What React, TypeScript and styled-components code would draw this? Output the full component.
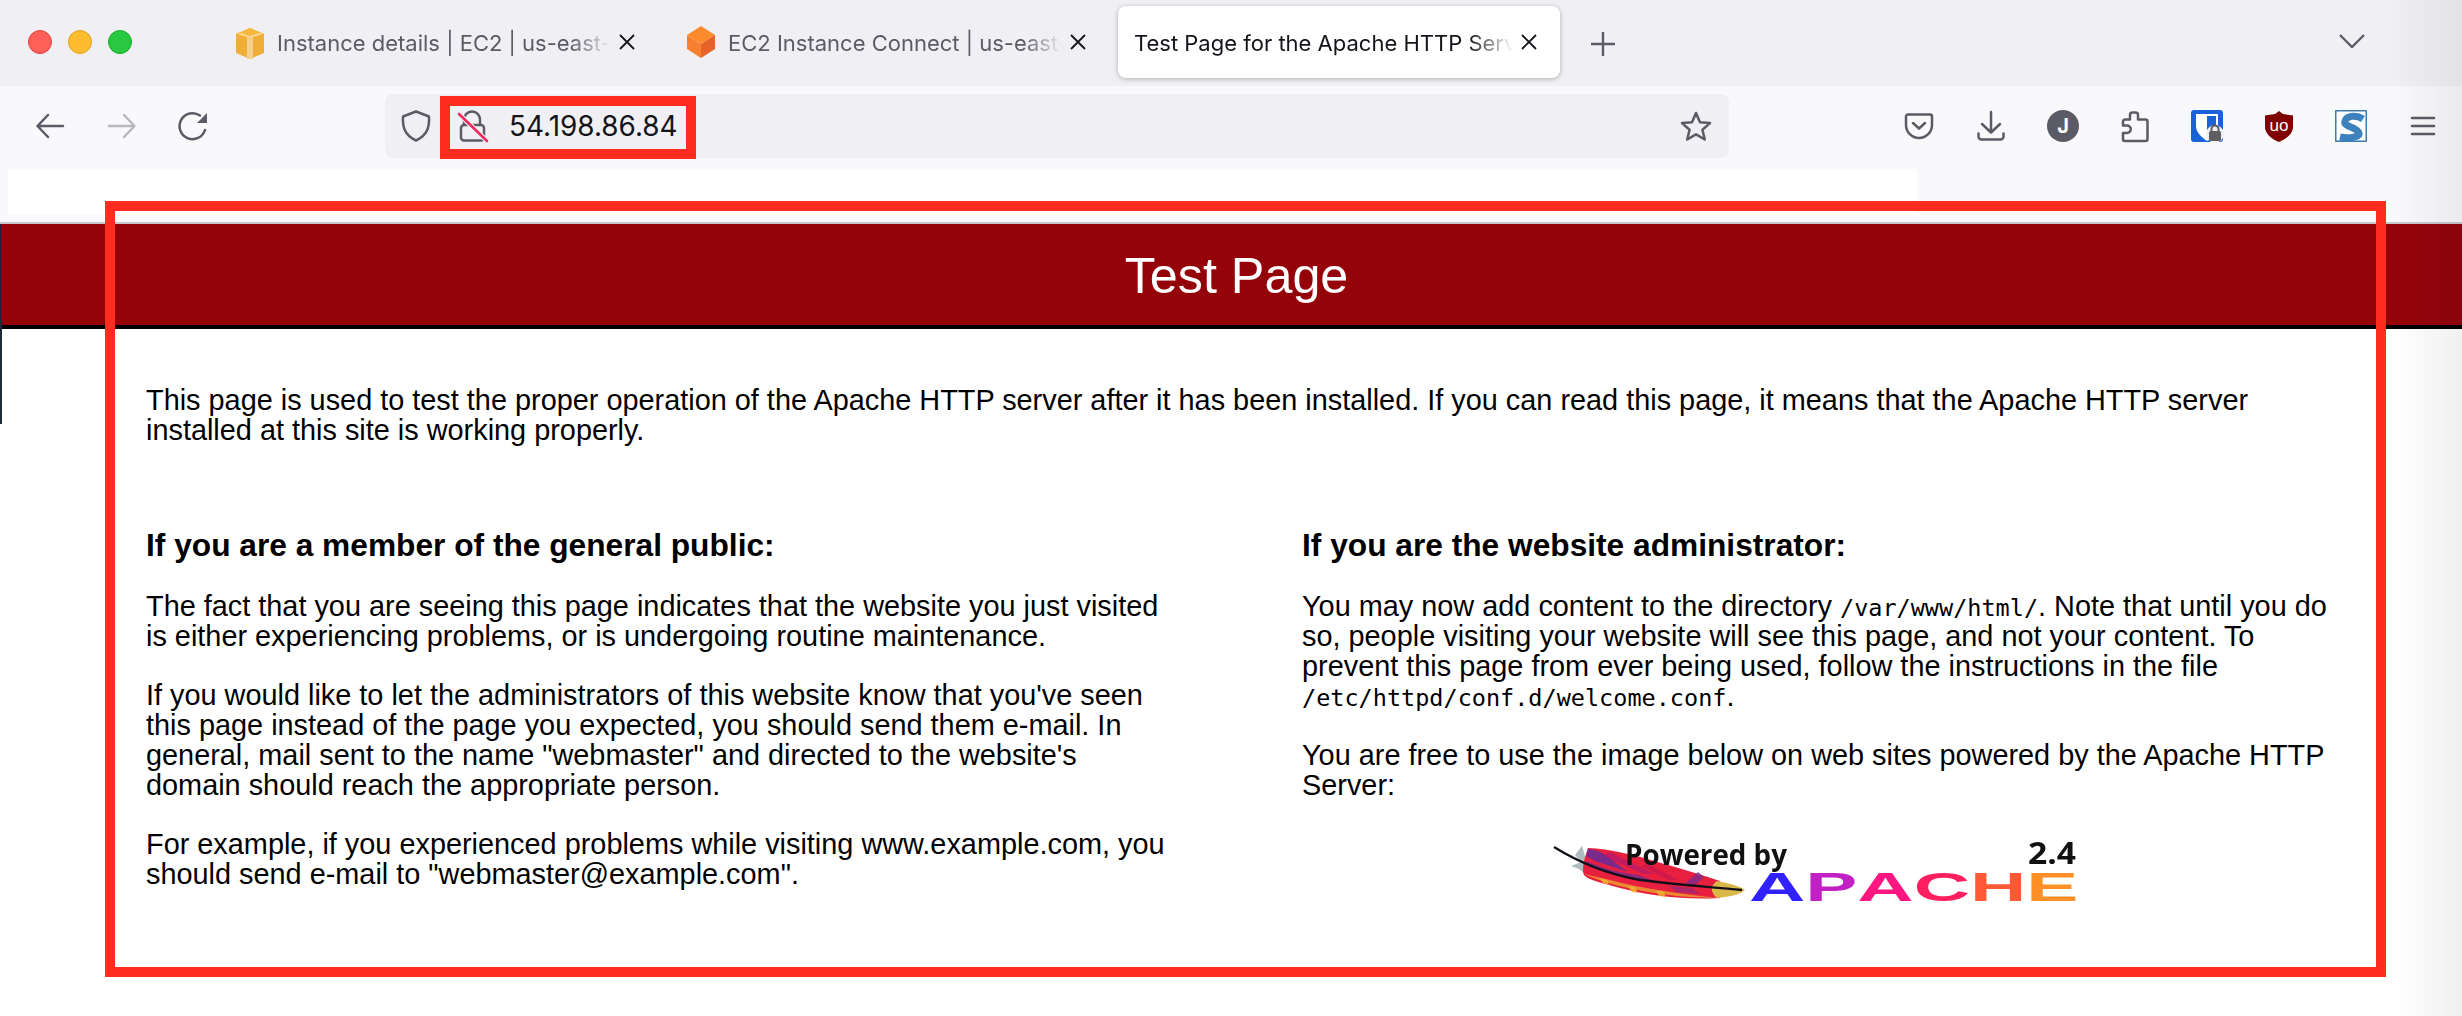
import { styled, createGlobalStyle } from 'styled-components';

const GlobalStyle = createGlobalStyle`
  html, body {
    margin: 0;
    padding: 0;
    background: #ffffff;
  }
  * {
    box-sizing: border-box;
  }
`;

const Screen = styled.div`
  position: relative;
  width: 2462px;
  height: 1016px;
  overflow: hidden;
  background: #ffffff;
  font-family: 'Liberation Sans', Arial, sans-serif;
`;

const TabBar = styled.div`
  display: flex;
  align-items: flex-start;
  height: 86px;
  background: #f0f0f4;
  font-family: Inter, 'Liberation Sans', sans-serif;
`;

const Lights = styled.div`
  display: flex;
  align-items: center;
  gap: 16px;
  width: 216px;
  height: 84px;
  padding-left: 28px;
`;

const Light = styled.span<{ $color: string; $edge: string }>`
  width: 24px;
  height: 24px;
  border-radius: 50%;
  background: ${(p) => p.$color};
  border: 1px solid ${(p) => p.$edge};
`;

const Tabs = styled.div`
  display: flex;
  gap: 9px;
  margin-top: 6px;
`;

const Tab = styled.div<{ $active?: boolean }>`
  display: flex;
  align-items: center;
  width: 442px;
  height: 72px;
  padding: 0 23px 0 ${(p) => (p.$active ? '16px' : '19px')};
  border-radius: 8px;
  background: ${(p) => (p.$active ? '#ffffff' : 'transparent')};
  box-shadow: ${(p) => (p.$active ? '0 1px 5px rgba(0, 0, 0, 0.28)' : 'none')};
`;

const Favicon = styled.svg`
  flex: none;
  width: 30px;
  height: 34px;
  margin-right: 12px;
`;

const TabTitle = styled.span<{ $active?: boolean }>`
  flex: 1;
  overflow: hidden;
  white-space: nowrap;
  padding-top: 2px;
  font-size: 22px;
  color: ${(p) => (p.$active ? '#15141a' : '#5b5b66')};
  mask-image: linear-gradient(to right, #000 88%, transparent 100%);
`;

const CloseIcon = styled.svg`
  flex: none;
  width: 16px;
  height: 16px;
  margin-left: 8px;
  stroke: #15141a;
  stroke-width: 1.8;
  fill: none;
`;

const NewTab = styled.svg`
  flex: none;
  width: 24px;
  height: 24px;
  margin: 32px 0 0 31px;
  stroke: #5b5b66;
  stroke-width: 2.4;
  fill: none;
`;

const TabListButton = styled.svg`
  flex: none;
  width: 26px;
  height: 14px;
  margin: 34px 97px 0 auto;
  stroke: #5b5b66;
  stroke-width: 2.4;
  fill: none;
`;

const Toolbar = styled.div`
  display: flex;
  align-items: flex-start;
  height: 83px;
  padding: 8px 3px 0 14px;
  background: #f9f9fb;
`;

const Slot = styled.div`
  display: flex;
  align-items: center;
  justify-content: center;
  width: 72px;
  height: 64px;
`;

const Glyph = styled.svg<{ $faded?: boolean }>`
  display: block;
  overflow: visible;
  fill: none;
  stroke: ${(p) => (p.$faded ? '#b8b8bd' : '#5b5b66')};
  stroke-width: 2.5;
  stroke-linecap: round;
  stroke-linejoin: round;
`;

const AddressBar = styled.div`
  display: flex;
  align-items: center;
  width: 1344px;
  height: 64px;
  margin-left: 155px;
  padding: 0 17px 0 16px;
  border-radius: 8px;
  background: #f0f0f4;
  font-family: Inter, 'Liberation Sans', sans-serif;
`;

const ShieldSlot = styled.div`
  flex: none;
  width: 57px;
`;

const LockSlot = styled.div`
  flex: none;
  width: 51px;
`;

const Url = styled.span`
  flex: 1;
  font-size: 27.9px;
  color: #15141a;
`;

const Actions = styled.div`
  display: flex;
  margin-left: auto;
`;

const ContentTop = styled.div`
  height: 55px;
  padding-left: 8px;
  background: #f9f9fb;
  border-bottom: 2px solid #c8c8cc;
`;

const BlankStrip = styled.div`
  width: 1909px;
  height: 46px;
  background: #ffffff;
`;

const Banner = styled.header`
  display: flex;
  align-items: center;
  justify-content: center;
  height: 105px;
  padding: 2px 0 0 11px;
  background: #95030a;
  border-bottom: 4px solid #000000;
`;

const Title = styled.h1`
  margin: 0;
  font-size: 50.3px;
  font-weight: 400;
  color: #ffffff;
`;

const Body = styled.main`
  padding: 56px 0 0 146px;
  font-size: 28.86px;
  line-height: 30px;
  color: #000000;
`;

const Intro = styled.p`
  width: 2180px;
  margin: 0 0 82px;
`;

const Columns = styled.div`
  display: grid;
  grid-template-columns: 1030px 1026px;
  column-gap: 126px;
`;

const Column = styled.section``;

const Heading = styled.h2`
  margin: 0 0 28px;
  font-size: 31.7px;
  line-height: 36px;
  font-weight: 700;
`;

const Para = styled.p`
  margin: 0 0 28.8px;
`;

const Code = styled.code`
  font-family: 'DejaVu Sans Mono', monospace;
  font-size: 23.5px;
  line-height: 1;
`;

const LogoRow = styled.div`
  display: flex;
  justify-content: center;
  padding-top: 5px;
`;

const Logo = styled.svg`
  display: block;
  width: 530px;
  height: 75px;
  filter: blur(0.6px);
`;

const Callout = styled.div<{ $left: number; $top: number; $width: number; $height: number }>`
  position: absolute;
  left: ${(p) => p.$left}px;
  top: ${(p) => p.$top}px;
  width: ${(p) => p.$width}px;
  height: ${(p) => p.$height}px;
  border: 10px solid #ff2d20;
  pointer-events: none;
`;

const DesktopEdge = styled.div`
  position: absolute;
  left: 0;
  top: 224px;
  width: 2px;
  height: 200px;
  background: #1d2a36;
`;

const SideShade = styled.div`
  position: absolute;
  right: 0;
  top: 0;
  bottom: 0;
  width: 70px;
  background: linear-gradient(to right, rgba(0, 0, 0, 0), rgba(0, 0, 0, 0.06));
  pointer-events: none;
`;

function Close() {
  return (
    <CloseIcon viewBox="0 0 16 16">
      <path d="M1 1l14 14M15 1L1 15" />
    </CloseIcon>
  );
}

function AwsCube() {
  return (
    <Favicon viewBox="0 0 30 34">
      <path d="M1 9l14-6 14 6v19l-14 6-14-6z" fill="#efae38" />
      <path d="M1 9l14-6 14 6-14 5z" fill="#f6b93d" />
      <path d="M3 9l12 4 12-4-2-1-10 3L5 8z" fill="#f8d89a" />
      <path d="M12 12.5h6V34h-6z" fill="#f5cf8c" />
    </Favicon>
  );
}

function ConnectCube() {
  return (
    <Favicon viewBox="0 0 30 34">
      <path d="M15 1l14 9-14 9-14-9z" fill="#fd8b2e" />
      <path d="M1 10l14 9v14L1 24z" fill="#f6802f" />
      <path d="M29 10L15 19v14l14-9z" fill="#e5622b" />
    </Favicon>
  );
}

function Feather() {
  return (
    <g>
      <path d="M32 12l3 10 4 9-4 9-6-5-8-3 10-4-6-7z" fill="#aebcc2" />
      <path
        d="M38 14C60 15 85 21 104 27C128 34 150 40 170 47L170 64C135 66 100 62 70 54C52 49 38 46 34 41C32 36 33 28 38 14Z"
        fill="#e81f3f"
      />
      <path d="M34 40C60 52 100 60 140 63L170 64C130 60 90 54 60 46z" fill="#e8a52e" opacity="0.8" />
      <path d="M38 15C48 16 56 20 62 26L78 38 45 27 36 22z" fill="#7a2a8c" />
      <path d="M36 31C55 38 85 46 110 49L88 41C70 39 52 34 36 27z" fill="#7a2a8c" opacity="0.85" />
      <path d="M60 18l44 22-10 0-40-18z" fill="#b01a70" opacity="0.7" />
      <path d="M98 30l30 16-9 0-28-14z" fill="#c21550" opacity="0.7" />
      <path d="M136 49l12-11 6 5-9 8z" fill="#7a2a8c" opacity="0.8" />
      <path d="M120 52l22 2 8 6-24-2z" fill="#7a2a8c" opacity="0.55" />
      <path d="M50 44l3 5 6 2-2-5zM78 52l4 6 6 1-3-6zM106 57l3 5 7 1-3-6z" fill="#f3b72e" opacity="0.8" />
      <path d="M167 47C178 49 190 52 195 56C190 61 178 63 167 64C160 58 160 52 167 47Z" fill="#d9b84a" />
      <path d="M4 13C25 26 50 38 85 45C115 50 150 52 192 56" fill="none" stroke="#14101a" strokeWidth="2.4" />
    </g>
  );
}

function PoweredByApache() {
  return (
    <Logo viewBox="0 0 530 75">
      <Feather />
      <text x="75" y="31" fontFamily="'Open Sans', sans-serif" fontWeight="700" fontSize="29" fill="#111111" textLength="162" lengthAdjust="spacingAndGlyphs">
        Powered by
      </text>
      <text x="478" y="30" fontFamily="'Open Sans', sans-serif" fontWeight="700" fontSize="31" fill="#111111" textLength="48" lengthAdjust="spacingAndGlyphs">
        2.4
      </text>
      <text transform="translate(199 67) scale(1.95 1)" fontFamily="'Liberation Sans', sans-serif" fontWeight="700" fontSize="40">
        <tspan fill="#3221ff">A</tspan>
        <tspan fill="#c020c4">P</tspan>
        <tspan fill="#ff1680">A</tspan>
        <tspan fill="#ff1f5e">C</tspan>
        <tspan fill="#ff5a36">H</tspan>
        <tspan fill="#ff9028">E</tspan>
      </text>
    </Logo>
  );
}

export default function App() {
  return (
    <Screen>
      <GlobalStyle />
      <TabBar>
        <Lights>
          <Light $color="#ff5f57" $edge="#e0443e" />
          <Light $color="#febc2e" $edge="#dea123" />
          <Light $color="#28c840" $edge="#1aab29" />
        </Lights>
        <Tabs>
          <Tab>
            <AwsCube />
            <TabTitle>Instance details | EC2 | us-east-1</TabTitle>
            <Close />
          </Tab>
          <Tab>
            <ConnectCube />
            <TabTitle>EC2 Instance Connect | us-east-1</TabTitle>
            <Close />
          </Tab>
          <Tab $active>
            <TabTitle $active>Test Page for the Apache HTTP Server on Red Hat</TabTitle>
            <Close />
          </Tab>
        </Tabs>
        <NewTab viewBox="0 0 24 24">
          <path d="M12 0v24M0 12h24" />
        </NewTab>
        <TabListButton viewBox="0 0 26 14">
          <path d="M1 1l12 12L25 1" />
        </TabListButton>
      </TabBar>

      <Toolbar>
        <Slot>
          <Glyph width="28" height="24" viewBox="0 0 28 24">
            <path d="M27 12H2M12 1L1.5 12 12 23" />
          </Glyph>
        </Slot>
        <Slot>
          <Glyph $faded width="28" height="24" viewBox="0 0 28 24">
            <path d="M1 12h25M16 1l10.5 11L16 23" />
          </Glyph>
        </Slot>
        <Slot>
          <Glyph width="30" height="28" viewBox="0 0 30 28">
            <path d="M26 18A13 13 0 1 1 21 3.5" />
            <path d="M28 1v10H18z" fill="#5b5b66" stroke="none" />
          </Glyph>
        </Slot>

        <AddressBar>
          <ShieldSlot>
            <Glyph width="30" height="32" viewBox="0 0 30 32">
              <path d="M15 1.5L28 6.5C28.5 16 27 25 15 30.5C3 25 1.5 16 2 6.5Z" />
            </Glyph>
          </ShieldSlot>
          <LockSlot>
            <Glyph width="30" height="32" viewBox="0 0 30 32">
              <path d="M6 15V9.5a8 8 0 0 1 16 0V15" />
              <rect x="3" y="15" width="23" height="15.5" rx="3" />
              <path d="M1 4l28 27" stroke="#f0f0f4" strokeWidth="5" />
              <path d="M1 4l28 27" stroke="#f2295f" strokeWidth="2.6" />
            </Glyph>
          </LockSlot>
          <Url>54.198.86.84</Url>
          <Glyph width="32" height="31" viewBox="0 0 32 31">
            <path d="M16 2l4 9.2 10 .9-7.6 6.6 2.4 9.8L16 23.3l-8.8 5.2 2.4-9.8L2 12.1l10-.9z" />
          </Glyph>
        </AddressBar>

        <Actions>
          <Slot>
            <Glyph width="28" height="26" viewBox="0 0 28 26">
              <path d="M3 1.5h22a2 2 0 0 1 2 2V12a13 13 0 0 1-26 0V3.5a2 2 0 0 1 2-2z" />
              <path d="M8 10l6 5.5L20 10" />
            </Glyph>
          </Slot>
          <Slot>
            <Glyph width="28" height="30" viewBox="0 0 28 30">
              <path d="M14 1v20M5 13l9 8.5 9-8.5" />
              <path d="M1.5 22.5v3a3 3 0 0 0 3 3h19a3 3 0 0 0 3-3v-3" />
            </Glyph>
          </Slot>
          <Slot>
            <Glyph width="32" height="32" viewBox="0 0 32 32">
              <circle cx="16" cy="16" r="16" fill="#5b5b66" stroke="none" />
              <text x="16" y="23" textAnchor="middle" fontFamily="Inter, sans-serif" fontWeight="700" fontSize="20" fill="#ffffff" stroke="none">
                J
              </text>
            </Glyph>
          </Slot>
          <Slot>
            <Glyph width="28" height="32" viewBox="0 0 28 32">
              <path d="M11 2.5h3.5a2.5 2.5 0 0 1 2.5 2.5v4.5h7.5a2 2 0 0 1 2 2v17.5a2 2 0 0 1-2 2H4a2 2 0 0 1-2-2v-6h4a3 3 0 0 0 0-7.5H2V11.5a2 2 0 0 1 2-2h5V5a2.5 2.5 0 0 1 2-2.5z" />
            </Glyph>
          </Slot>
          <Slot>
            <Glyph width="32" height="32" viewBox="0 0 32 32">
              <rect width="32" height="32" rx="3" fill="#1a62d8" stroke="none" />
              <path d="M5 4h22v12c0 6-5 11-11 15C10 27 5 22 5 16z" fill="#ffffff" stroke="none" />
              <path d="M16 6h9v11c0 4-4 8-9 11z" fill="#1a62d8" stroke="none" />
              <circle cx="24" cy="24" r="9" fill="#f0f0f4" stroke="none" />
              <rect x="18" y="21" width="12" height="10" rx="1.5" fill="#5f5f5f" stroke="none" />
              <path d="M20.5 21v-2a3.5 3.5 0 0 1 7 0v2" stroke="#5f5f5f" strokeWidth="2" />
            </Glyph>
          </Slot>
          <Slot>
            <Glyph width="28" height="31" viewBox="0 0 28 31">
              <path d="M14 0l4 3 10 1.5V16c0 6-6 12-14 15C6 28 0 22 0 16V4.5L10 3z" fill="#800000" stroke="none" />
              <text x="14" y="20" textAnchor="middle" fontFamily="'Liberation Sans', sans-serif" fontWeight="400" fontSize="17" fill="#ffffff" stroke="none">
                uo
              </text>
            </Glyph>
          </Slot>
          <Slot>
            <Glyph width="32" height="32" viewBox="0 0 32 32">
              <rect x="0.75" y="0.75" width="30.5" height="30.5" fill="#ffffff" stroke="#3d7bb0" strokeWidth="1.5" />
              <path d="M28 9C22 5 12 5 10 11C8 17 22 17 24 23C25 27 15 29 5 27" stroke="#3d82bd" strokeWidth="7" strokeLinecap="butt" />
            </Glyph>
          </Slot>
          <Slot>
            <Glyph width="24" height="20" viewBox="0 0 24 20">
              <path d="M1 2h22M1 10h22M1 18h22" />
            </Glyph>
          </Slot>
        </Actions>
      </Toolbar>

      <ContentTop>
        <BlankStrip />
      </ContentTop>

      <Banner>
        <Title>Test Page</Title>
      </Banner>

      <Body>
        <Intro>
          This page is used to test the proper operation of the Apache HTTP server after it has been installed. If you can read this page, it means that the Apache HTTP server installed at this site is working properly.
        </Intro>
        <Columns>
          <Column>
            <Heading>If you are a member of the general public:</Heading>
            <Para>The fact that you are seeing this page indicates that the website you just visited is either experiencing problems, or is undergoing routine maintenance.</Para>
            <Para>If you would like to let the administrators of this website know that you've seen this page instead of the page you expected, you should send them e-mail. In general, mail sent to the name "webmaster" and directed to the website's domain should reach the appropriate person.</Para>
            <Para>For example, if you experienced problems while visiting www.example.com, you should send e-mail to "webmaster@example.com".</Para>
          </Column>
          <Column>
            <Heading>If you are the website administrator:</Heading>
            <Para>
              You may now add content to the directory <Code>/var/www/html/</Code>. Note that until you do so, people visiting your website will see this page, and not your content. To prevent this page from ever being used, follow the instructions in the file <Code>/etc/httpd/conf.d/welcome.conf</Code>.
            </Para>
            <Para>You are free to use the image below on web sites powered by the Apache HTTP Server:</Para>
            <LogoRow>
              <PoweredByApache />
            </LogoRow>
          </Column>
        </Columns>
      </Body>

      <Callout $left={440} $top={96} $width={256} $height={63} />
      <Callout $left={105} $top={201} $width={2281} $height={776} />
      <DesktopEdge />
      <SideShade />
    </Screen>
  );
}
